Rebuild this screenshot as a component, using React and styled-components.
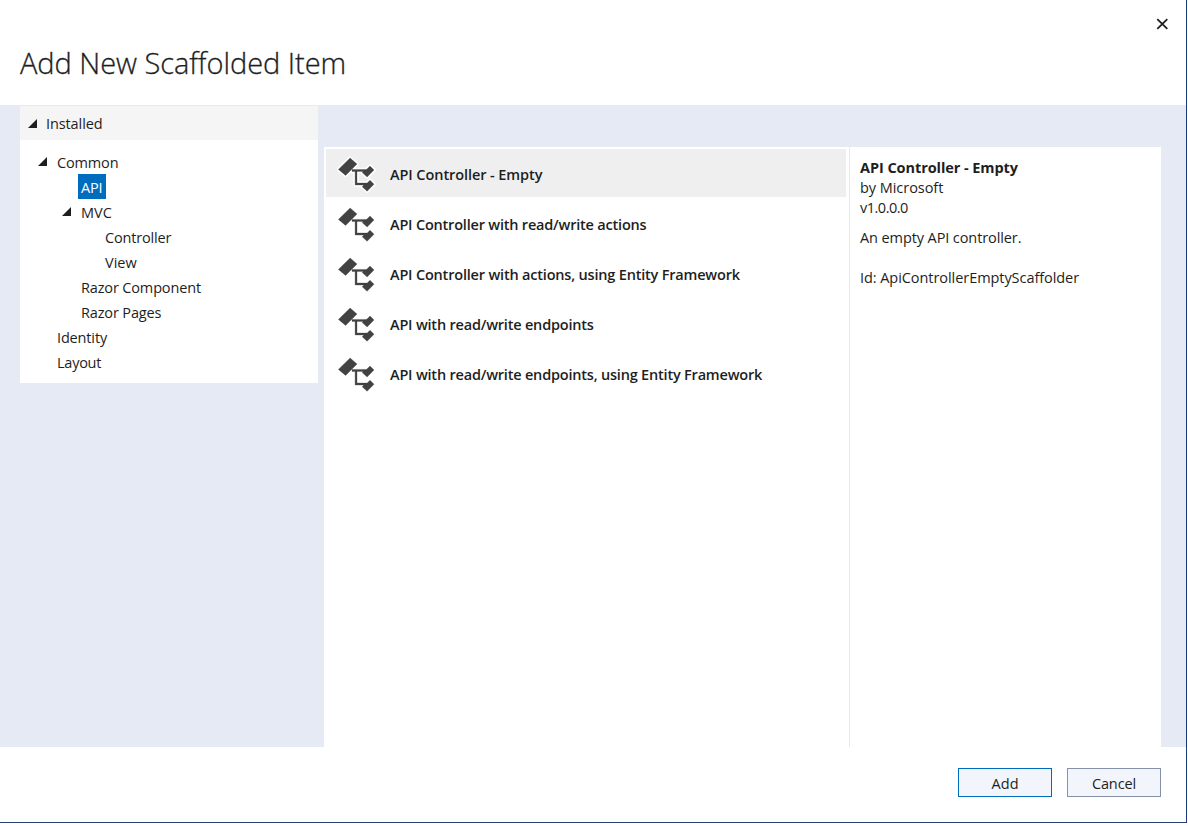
import React from "react";
import styled, { createGlobalStyle } from "styled-components";

const GlobalStyle = createGlobalStyle`
  *, *::before, *::after { box-sizing: border-box; }
  body {
    margin: 0;
    background: #fff;
    color: #1e1e1e;
    font: 14.5px/20px "Open Sans", "Noto Sans", sans-serif;
  }
`;

const Dialog = styled.div`
  width: 1187px;
  height: 823px;
  display: flex;
  flex-direction: column;
  background: #fff;
  border-right: 1px solid #1b3a7a;
  border-bottom: 1px solid #293f77;
`;

const Header = styled.header`
  height: 105px;
  display: flex;
  justify-content: space-between;
  align-items: flex-start;
  padding: 17px 16px 0 20px;
`;

const Title = styled.h1`
  margin: 26px 0 0;
  font-size: 29px;
  line-height: 39px;
  font-weight: 300;
  letter-spacing: -0.05px;
  -webkit-text-stroke: 0.3px #1e1e1e;
  white-space: nowrap;
`;

const CloseButton = styled.button`
  display: flex;
  padding: 0;
  border: 0;
  background: none;
`;

const Body = styled.main`
  height: 642px;
  display: flex;
  background: #e6eaf5;
  padding: 0 25px 0 20px;
`;

const Sidebar = styled.aside`
  width: 298px;
  margin: 1px 6px 0 0;
`;

const SidebarHeading = styled.div`
  height: 34px;
  display: flex;
  align-items: center;
  padding: 1px 0 0 8px;
  gap: 8px;
  background: #f5f5f5;
`;

const Tree = styled.ul`
  list-style: none;
  margin: 0;
  padding: 9px 0;
  height: 243px;
  background: #fff;
`;

const TreeRow = styled.li`
  height: 25px;
  display: flex;
  align-items: center;
  padding-left: ${(p) => 18 + p.$level * 24}px;
`;

const Twisty = styled.span`
  width: 16px;
  display: flex;
  flex: none;
`;

const TreeLabel = styled.span`
  height: 25px;
  line-height: 27px;
  padding: 0 3px;
  white-space: nowrap;
  color: ${(p) => (p.$selected ? "#fff" : "inherit")};
  background: ${(p) => (p.$selected ? "#006cbe" : "transparent")};
`;

const Label = styled.span`
  letter-spacing: ${(p) => p.$track || 0}px;
  white-space: nowrap;
`;

const TemplateList = styled.section`
  width: 526px;
  margin-top: 42px;
  padding: 2px 3px 0 2px;
  display: flex;
  flex-direction: column;
  gap: 2px;
  background: #fff;
  border-right: 1px solid #e6e8f2;
`;

const TemplateRow = styled.div`
  height: 48px;
  display: flex;
  align-items: center;
  gap: 13px;
  padding: 4px 0 0 11px;
  background: ${(p) => (p.$selected ? "#efefef" : "transparent")};
`;

const TemplateLabel = styled(Label)`
  font-weight: 600;
`;

const Details = styled.section`
  flex: 1;
  margin-top: 42px;
  padding: 11px 10px;
  background: #fff;
`;

const Line = styled.p`
  margin: 0 0 ${(p) => p.$after || 0}px;
  height: 20px;
  font-weight: ${(p) => (p.$bold ? 700 : 400)};
`;

const Footer = styled.footer`
  display: flex;
  justify-content: flex-end;
  gap: 15px;
  padding: 21px 25px 0 0;
`;

const Button = styled.button`
  width: 94px;
  height: 29px;
  padding: 2px 0 0;
  font: inherit;
  line-height: 25px;
  letter-spacing: ${(p) => (p.$primary ? 0.1 : -0.1)}px;
  color: #1e1e1e;
  background: #f2f5fc;
  border: 1px solid ${(p) => (p.$primary ? "#006cbe" : "#8591a9")};
`;

const ExpandedArrow = () => (
  <svg width="10" height="9" viewBox="0 0 10 9">
    <path d="M9 0V9H0Z" fill="#1e1e1e" />
  </svg>
);

const CloseIcon = () => (
  <svg width="14" height="14" viewBox="0 0 14 14">
    <path d="M1.3 2.2 11.3 11.8M11.3 2.2 1.3 11.8" stroke="#1e1e1e" strokeWidth="1.8" />
  </svg>
);

const shapes = [
  "M.4 11.4 12.1 0 19 6 7.6 17.4Z",
  "M14 11.4H29V13.4H19V25H29V27H17.1V13.4H14Z",
  "M24.2 14.6 26 12.6 28 12 32 8 36 12 29.1 19Z",
  "M24.2 28.8 26 26.8 28 26.2 32 22.2 36 26.2 29.1 33.3Z",
].join("");

const IconDrawing = styled.svg`
  display: block;
  flex: none;
  margin-top: -2px;
`;

const ControllerIcon = () => (
  <IconDrawing width="40" height="38" viewBox="-1 -3 40 38">
    <path d={shapes} fill="#fff" stroke="#fff" strokeWidth="3.4" strokeLinejoin="round" />
    <path d={shapes} fill="#424242" stroke="#424242" strokeWidth=".3" />
  </IconDrawing>
);

const tree = [
  { label: "Common", level: 0, open: true, track: -0.15 },
  { label: "API", level: 1, selected: true, track: -0.15 },
  { label: "MVC", level: 1, open: true },
  { label: "Controller", level: 2, track: -0.18 },
  { label: "View", level: 2 },
  { label: "Razor Component", level: 1, track: -0.15 },
  { label: "Razor Pages", level: 1, track: -0.15 },
  { label: "Identity", level: 0, track: -0.15 },
  { label: "Layout", level: 0, track: -0.25 },
];

const templates = [
  { label: "API Controller - Empty", track: -0.08 },
  { label: "API Controller with read/write actions", track: -0.2 },
  { label: "API Controller with actions, using Entity Framework", track: -0.19 },
  { label: "API with read/write endpoints", track: -0.2 },
  { label: "API with read/write endpoints, using Entity Framework", track: -0.2 },
];

const details = [
  { label: "API Controller - Empty", bold: true, track: -0.07 },
  { label: "by Microsoft", track: -0.05 },
  { label: "v1.0.0.0", after: 10, track: -0.5 },
  { label: "An empty API controller.", after: 20, track: -0.1 },
  { label: "Id: ApiControllerEmptyScaffolder", track: -0.06 },
];

export default function App() {
  return (
    <>
      <GlobalStyle />
      <Dialog>
        <Header>
          <Title>Add New Scaffolded Item</Title>
          <CloseButton aria-label="Close">
            <CloseIcon />
          </CloseButton>
        </Header>
        <Body>
          <Sidebar>
            <SidebarHeading>
              <ExpandedArrow />
              <Label $track={-0.1}>Installed</Label>
            </SidebarHeading>
            <Tree>
              {tree.map((n) => (
                <TreeRow key={n.label} $level={n.level}>
                  <Twisty>{n.open && <ExpandedArrow />}</Twisty>
                  <TreeLabel $selected={n.selected}>
                    <Label $track={n.track}>{n.label}</Label>
                  </TreeLabel>
                </TreeRow>
              ))}
            </Tree>
          </Sidebar>
          <TemplateList>
            {templates.map((t, i) => (
              <TemplateRow key={t.label} $selected={i === 0}>
                <ControllerIcon />
                <TemplateLabel $track={t.track}>{t.label}</TemplateLabel>
              </TemplateRow>
            ))}
          </TemplateList>
          <Details>
            {details.map((d) => (
              <Line key={d.label} $bold={d.bold} $after={d.after}>
                <Label $track={d.track}>{d.label}</Label>
              </Line>
            ))}
          </Details>
        </Body>
        <Footer>
          <Button $primary>Add</Button>
          <Button>Cancel</Button>
        </Footer>
      </Dialog>
    </>
  );
}
